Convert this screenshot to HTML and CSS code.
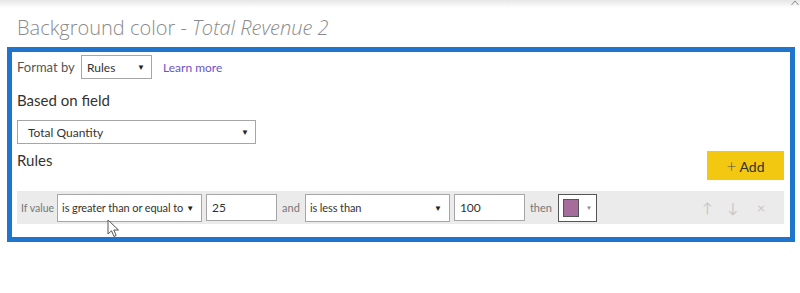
FILE: index.html
```html
<!DOCTYPE html>
<html lang="en">
<head>
    <meta charset="UTF-8">
    <meta name="viewport" content="width=device-width, initial-scale=1.0">
    <title>Background color</title>
    <link rel="stylesheet" href="styles.css">
</head>
<body>
    <div class="topbar">
        <svg class="caret" width="8" height="6" viewBox="0 0 8 6">
            <path d="M0.5 5 L4 1 L7.5 5" fill="none" stroke="#888" stroke-width="1"/>
        </svg>
    </div>

    <h1 class="title">Background color - <em>Total Revenue 2</em></h1>

    <div class="panel">
        <!-- Format by -->
        <div class="format-row">
            <span class="label-small">Format by</span>
            <div class="select select-rules">
                <span>Rules</span>
                <span class="arrow">&#9660;</span>
            </div>
            <a class="learn" href="#">Learn more</a>
        </div>

        <div class="section-label">Based on field</div>
        <div class="select select-field">
            <span>Total Quantity</span>
            <span class="arrow">&#9660;</span>
        </div>

        <div class="rules-head">
            <div class="section-label">Rules</div>
            <button class="add-btn"><span class="plus">+</span> Add</button>
        </div>

        <!-- Rule row -->
        <div class="rule-row">
            <span class="row-text if-text">If value</span>
            <div class="select select-op">
                <span>is greater than or equal to</span>
                <span class="arrow">&#9660;</span>
            </div>
            <div class="num-input">25</div>
            <span class="row-text">and</span>
            <div class="select select-op">
                <span>is less than</span>
                <span class="arrow">&#9660;</span>
            </div>
            <div class="num-input">100</div>
            <span class="row-text">then</span>
            <div class="color-pick">
                <span class="swatch"></span>
                <span class="small-arrow">&#9660;</span>
            </div>
            <div class="row-actions">
                <span>&#8593;</span>
                <span>&#8595;</span>
                <span class="remove">&#215;</span>
            </div>
        </div>

        <svg class="cursor" width="14" height="20" viewBox="0 0 14 20">
            <path d="M1 1 L1 15 L4.5 11.8 L7 17.5 L9.2 16.5 L6.8 11 L11.5 11 Z" fill="#fff" stroke="#555" stroke-width="1"/>
        </svg>
    </div>
</body>
</html>
```

FILE: styles.css
```css
body {
    margin: 0;
    background-color: #fff;
    font-family: "Segoe UI", Lato, "Open Sans", sans-serif;
    color: #333;
}

.topbar {
    height: 8px;
    background: linear-gradient(#e6e6e6, #fff);
    position: relative;
}

.caret {
    position: absolute;
    right: 1px;
    top: 0;
}

.title {
    margin: 6px 0 0 17px;
    height: 33px;
    font-family: "Open Sans", sans-serif;
    font-size: 20px;
    font-weight: 300;
    color: #8a8a8a;
    line-height: 28px;
}

.title em {
    font-style: italic;
}

.panel {
    position: relative;
    box-sizing: border-box;
    margin-left: 7px;
    width: 788px;
    height: 195px;
    border: 5px solid #1f74cd;
    padding: 3px 6px 0 5px;
}

.format-row {
    display: flex;
    align-items: center;
    height: 24px;
}

.label-small {
    font-size: 13px;
    color: #555;
    width: 64px;
}

.select {
    display: flex;
    align-items: center;
    justify-content: space-between;
    box-sizing: border-box;
    border: 1px solid #a6a6a6;
    background-color: #fff;
    font-size: 11px;
    color: #333;
    white-space: nowrap;
}

.arrow {
    font-size: 8px;
    color: #222;
}

.select-rules {
    width: 71px;
    height: 24px;
    padding: 0 6px 0 5px;
    font-size: 12px;
}

.learn {
    margin-left: 11px;
    font-size: 12px;
    color: #6b53c9;
    text-decoration: none;
}

.section-label {
    font-size: 15px;
    color: #333;
    line-height: 20px;
}

.format-row + .section-label {
    margin-top: 11px;
}

.select-field {
    margin-top: 10px;
    width: 239px;
    height: 24px;
    padding: 0 6px 0 10px;
    font-size: 12px;
}

.rules-head {
    display: flex;
    justify-content: space-between;
    align-items: flex-start;
    margin-top: 6px;
}

.add-btn {
    margin-top: 1px;
    width: 77px;
    height: 29px;
    border: none;
    background-color: #f2c811;
    font-family: inherit;
    font-size: 14px;
    color: #333;
    cursor: pointer;
}

.plus {
    font-size: 17px;
    font-weight: 300;
    color: #555;
}

.rule-row {
    display: flex;
    align-items: center;
    height: 33px;
    margin-top: 11px;
    padding-left: 4px;
    background-color: #ebebeb;
}

.row-text {
    font-size: 11px;
    color: #777;
}

.if-text {
    font-size: 10.5px;
    margin-right: 3px;
}

.select-op {
    width: 145px;
    height: 28px;
    padding: 0 7px 0 4px;
    font-size: 11px;
    letter-spacing: -0.1px;
}

.num-input {
    box-sizing: border-box;
    width: 71px;
    height: 27px;
    margin: 0 4px;
    padding: 5px 0 0 5px;
    border: 1px solid #a6a6a6;
    background-color: #fff;
    font-size: 12px;
}

.num-input + .row-text {
    margin-left: 1px;
    margin-right: 5px;
}

.color-pick {
    display: flex;
    align-items: center;
    box-sizing: border-box;
    width: 39px;
    height: 28px;
    margin-left: 1px;
    padding-left: 4px;
    border: 1px solid #555;
    background-color: #fff;
}

.swatch {
    width: 14px;
    height: 16px;
    border: 1px solid #555;
    background-color: #a66c9c;
}

.small-arrow {
    margin-left: 7px;
    font-size: 6px;
    color: #888;
}

.row-actions {
    display: flex;
    margin-left: auto;
    margin-right: 19px;
    gap: 15px;
    font-size: 14px;
    color: #c6c6c6;
}

.row-actions .remove {
    margin-left: 4px;
}

.cursor {
    position: absolute;
    left: 95px;
    top: 167px;
}
```
